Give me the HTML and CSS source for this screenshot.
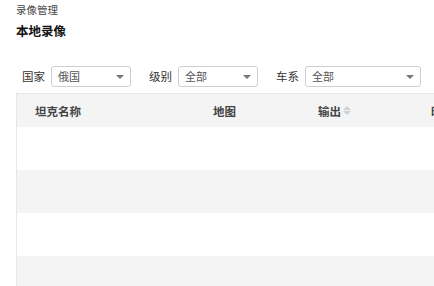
FILE: index.html
```html
<!DOCTYPE html>
<html lang="zh">
<head>
<meta charset="utf-8">
<link rel="stylesheet" href="styles.css">
</head>
<body>
<div class="page">
  <div class="crumb">录像管理</div>
  <h1 class="title">本地录像</h1>
  <div class="filters">
    <label class="flabel">国家</label>
    <div class="select w80"><span>俄国</span><i class="caret"></i></div>
    <label class="flabel">级别</label>
    <div class="select w80"><span>全部</span><i class="caret"></i></div>
    <label class="flabel">车系</label>
    <div class="select w116"><span>全部</span><i class="caret"></i></div>
  </div>
  <div class="table">
    <div class="thead">
      <div class="th c1">坦克名称</div>
      <div class="th c2">地图</div>
      <div class="th c3">输出<span class="sort"><i class="up"></i><i class="down"></i></span></div>
      <div class="th c4">时间</div>
    </div>
    <div class="row"></div>
    <div class="row alt"></div>
    <div class="row"></div>
    <div class="row alt"></div>
  </div>
</div>
</body>
</html>
```
FILE: styles.css
```css
html, body {
  margin: 0;
  padding: 0;
  background: #fff;
  overflow: hidden;
}
body {
  width: 434px;
  height: 286px;
  font-family: "Noto Sans CJK SC", "Noto Sans", sans-serif;
  color: #333;
}
.page {
  padding: 3px 0 0 16px;
}
.crumb {
  font-size: 10.5px;
  line-height: 14px;
  color: #444;
}
.title {
  margin: 6px 0 0 0;
  font-size: 12.5px;
  line-height: 16px;
  font-weight: bold;
  color: #111;
}
.filters {
  display: flex;
  align-items: center;
  margin-top: 27px;
  padding-left: 6px;
  height: 21px;
}
.flabel {
  flex-shrink: 0;
  white-space: nowrap;
  font-size: 11.5px;
  color: #333;
  margin-right: 6px;
  line-height: 21px;
}
.select {
  flex-shrink: 0;
  position: relative;
  box-sizing: border-box;
  height: 21px;
  border: 1px solid #cfcfcf;
  border-radius: 3px;
  background: #fff;
  font-size: 11px;
  color: #555;
  line-height: 19px;
  padding-left: 6px;
  margin-right: 18px;
}
.w80 { width: 80px; }
.w116 { width: 116px; }
.caret {
  position: absolute;
  right: 6px;
  top: 8px;
  width: 0;
  height: 0;
  border-left: 4px solid transparent;
  border-right: 4px solid transparent;
  border-top: 4px solid #777;
}
.table {
  margin-top: 6px;
  width: 640px;
  border-left: 1px solid #e6e6e6;
  border-top: 1px solid #e6e6e6;
}
.thead {
  display: flex;
  height: 33px;
  background: #f4f4f4;
  align-items: center;
}
.th {
  flex-shrink: 0;
  white-space: nowrap;
  font-size: 11.5px;
  font-weight: bold;
  color: #444;
  box-sizing: border-box;
  display: flex;
  align-items: center;
}
.c1 { width: 196px; padding-left: 18px; }
.c2 { width: 105px; }
.c3 { width: 113px; }
.c4 { width: 100px; }
.sort {
  display: inline-flex;
  flex-direction: column;
  margin-left: 2px;
  gap: 1px;
}
.sort i {
  width: 0;
  height: 0;
  border-left: 4px solid transparent;
  border-right: 4px solid transparent;
}
.sort .up { border-bottom: 4px solid #d0d0d0; }
.sort .down { border-top: 4px solid #d0d0d0; }
.row {
  height: 43px;
  background: #fff;
}
.row.alt {
  background: #f4f4f4;
}
```
